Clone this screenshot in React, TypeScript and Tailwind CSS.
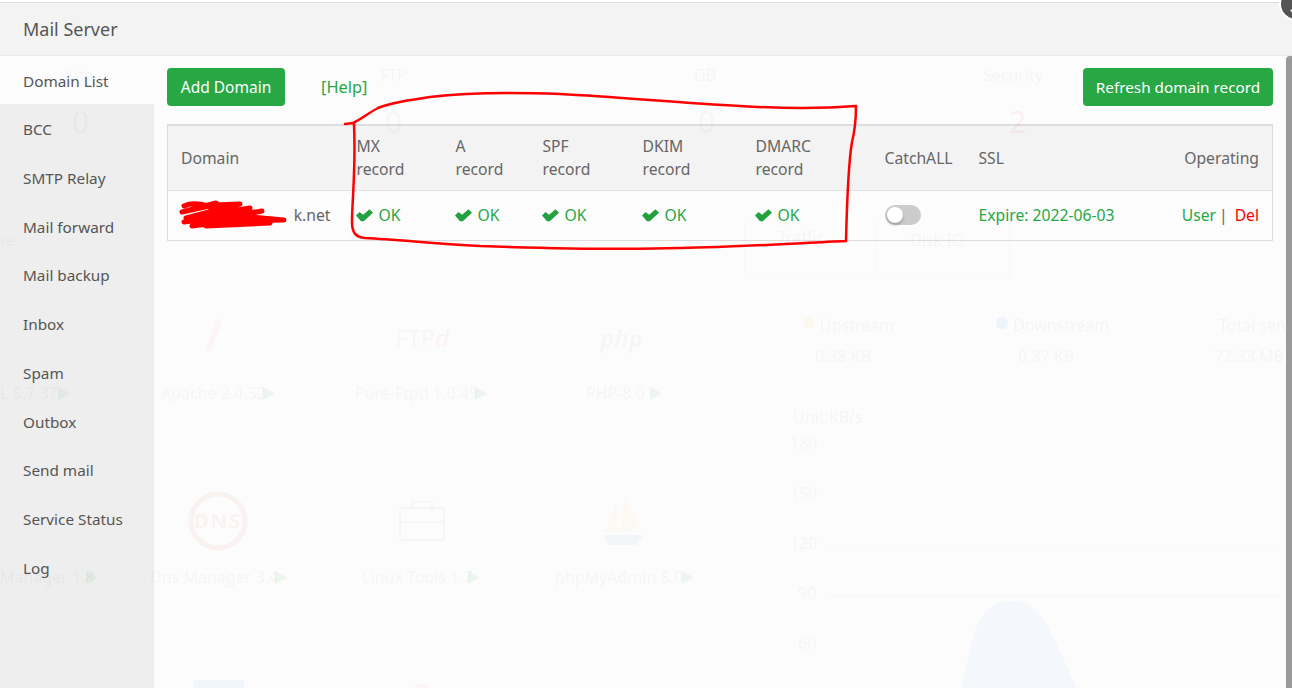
const sideItems = [
  'Domain List',
  'BCC',
  'SMTP Relay',
  'Mail forward',
  'Mail backup',
  'Inbox',
  'Spam',
  'Outbox',
  'Send mail',
  'Service Status',
  'Log',
];

const records = [
  { name: 'MX', width: 'w-[99px]' },
  { name: 'A', width: 'w-[87px]' },
  { name: 'SPF', width: 'w-[100px]' },
  { name: 'DKIM', width: 'w-[113px]' },
  { name: 'DMARC', width: 'w-[129px]' },
];

// what shows through the translucent dialog from the page behind it
const ghostText = [
  { text: 'Site', x: 66, y: 64 },
  { text: 'FTP', x: 380, y: 64 },
  { text: 'DB', x: 694, y: 64 },
  { text: 'Security', x: 983, y: 64 },
  { text: 'Traffic', x: 778, y: 226 },
  { text: 'Disk IO', x: 910, y: 229 },
  { text: 're', x: 0, y: 229 },
  { text: 'L 5.7.37', x: 0, y: 382 },
  { text: 'Apache 2.4.52', x: 161, y: 382 },
  { text: 'Pure-Ftpd 1.0.49', x: 355, y: 382 },
  { text: 'PHP-8.0', x: 586, y: 382 },
  { text: 'Manager 1.8', x: 0, y: 566 },
  { text: 'Dns Manager 3.4', x: 150, y: 566 },
  { text: 'Linux Tools 1.7', x: 362, y: 566 },
  { text: 'phpMyAdmin 5.0', x: 555, y: 566 },
  { text: 'Upstream', x: 820, y: 314 },
  { text: 'Downstream', x: 1013, y: 314 },
  { text: 'Total sent', x: 1219, y: 314 },
  { text: '0.38 KB', x: 815, y: 345 },
  { text: '0.37 KB', x: 1018, y: 345 },
  { text: '72.33 MB', x: 1214, y: 345 },
  { text: 'Unit:KB/s', x: 793, y: 406 },
  { text: '180', x: 790, y: 432 },
  { text: '150', x: 790, y: 482 },
  { text: '120', x: 790, y: 532 },
  { text: '90', x: 798, y: 582 },
  { text: '60', x: 798, y: 632 },
];

const ghostArrows = [58, 263, 475, 650].map((x) => ({ x, y: 387 })).concat(
  [86, 275, 468, 682].map((x) => ({ x, y: 571 })),
);

function GhostLayer() {
  return (
    <div className="pointer-events-none absolute inset-0 overflow-hidden blur-[0.5px]">
      {ghostText.map((g) => (
        <span
          key={g.text}
          className="absolute text-[16px] leading-[22px] whitespace-nowrap text-black/[0.03]"
          style={{ left: g.x, top: g.y }}
        >
          {g.text}
        </span>
      ))}
      {[
        { v: '0', x: 72, c: 'text-[#20a53a]/[0.04]' },
        { v: '0', x: 385, c: 'text-[#20a53a]/[0.04]' },
        { v: '0', x: 698, c: 'text-[#20a53a]/[0.04]' },
        { v: '2', x: 1009, c: 'text-[#ff0000]/[0.05]' },
      ].map((n) => (
        <span
          key={n.x}
          className={`absolute top-[100px] text-[30px] leading-[44px] ${n.c}`}
          style={{ left: n.x }}
        >
          {n.v}
        </span>
      ))}
      <span className="absolute top-[322px] left-[395px] text-[24px] leading-[32px] text-black/[0.025]">
        FTP<i className="text-[#ff0000]/[0.04]">d</i>
      </span>
      <span className="absolute top-[322px] left-[600px] text-[24px] leading-[32px] font-bold text-black/[0.025] italic">
        php
      </span>
      <span className="absolute top-[508px] left-[193px] w-[50px] text-center text-[20px] leading-[26px] font-bold tracking-[2px] text-[#e0301e]/[0.05]">
        DNS
      </span>
      <svg className="absolute inset-0" width="1292" height="688" viewBox="0 0 1292 688" fill="none">
        {ghostArrows.map((a) => (
          <path
            key={a.x}
            d={`M${a.x} ${a.y}l12 6.500l-12 6.500z`}
            fill="#20a53a"
            fillOpacity="0.07"
          />
        ))}
        <path d="M745 218v60h122M877 218v60h133v-60" stroke="#000" strokeOpacity="0.015" />
        <path d="M827 546h465M827 596h465" stroke="#000" strokeOpacity="0.015" />
        <path
          d="M962 688C972 640 975 601 1013 601C1045 601 1055 645 1077 688Z"
          fill="#2f8fff"
          fillOpacity="0.04"
        />
        <circle cx="809" cy="323" r="6" fill="#ffae00" fillOpacity="0.05" />
        <circle cx="1002" cy="323" r="6" fill="#2f8fff" fillOpacity="0.07" />
        <circle cx="218" cy="521" r="27" stroke="#e0301e" strokeOpacity="0.05" strokeWidth="5" />
        <rect x="400" y="508" width="44" height="32" rx="2" stroke="#000" strokeOpacity="0.025" strokeWidth="2" />
        <path d="M412 508v-6h20v6M400 522h44" stroke="#000" strokeOpacity="0.025" strokeWidth="2" />
        <path d="M605 532l12-30v30zM620 532l5-34 16 30z" fill="#ff9d00" fillOpacity="0.04" />
        <path d="M604 535h40l-8 10h-28z" fill="#3b4fa0" fillOpacity="0.04" />
        <path d="M216 318l6 4-12 30-4-2z" fill="#e0301e" fillOpacity="0.035" />
        <rect x="193" y="680" width="51" height="12" rx="4" fill="#2f8fff" fillOpacity="0.05" />
        <circle cx="421" cy="692" r="8" fill="#e0301e" fillOpacity="0.04" />
      </svg>
    </div>
  );
}

function Toggle() {
  return (
    <div className="relative h-[20px] w-[36px] rounded-full bg-[#cccccc]">
      <div className="absolute top-[2px] left-[2px] size-[16px] rounded-full bg-white shadow-[0_2px_3px_rgba(0,0,0,0.25)]" />
    </div>
  );
}

function CheckMark() {
  return (
    <svg width="17" height="13" viewBox="0 0 16 12" className="-ml-[1px] shrink-0">
      <path d="M0 6L3.300 2.700L6.700 5.300L12.700 0L16 3.300L7.300 11.500H4.700Z" fill="#23a03f" />
    </svg>
  );
}

export default function App() {
  return (
    <div
      className="relative h-[688px] w-[1292px] overflow-hidden bg-white text-[15.7px] text-[#666666]"
      style={{ fontFamily: '"Noto Sans", "Open Sans", sans-serif' }}
    >
      <div className="mt-[2px] flex h-[686px] flex-col border-t border-[#dddddd]">
        <div className="flex h-[53px] items-center border-b border-[#e8e8e8] bg-[#f3f3f3] pl-[23px] text-[18px] text-[#555555]">
          Mail Server
        </div>

        <div className="flex min-h-0 flex-1">
          {/* Sidebar */}
          <aside className="w-[154px] bg-[#eeeeee]">
            {sideItems.map((item, i) => (
              <div
                key={item}
                className={`flex items-center pt-[3px] pl-[23px] text-[15.3px] text-[#555555] ${
                  i === 0 ? 'h-[48px] bg-[#fcfcfc]' : 'h-[48.7px]'
                }`}
              >
                {item}
              </div>
            ))}
          </aside>

          {/* Content */}
          <main className="flex-1 bg-[#fcfcfc] pt-[12px] pr-[19px] pl-[13px]">
            <div className="flex h-[38px] items-center">
              <button
                type="button"
                className="h-[38px] w-[118px] rounded bg-[#28a745] pt-[1px] text-[15.5px] text-white"
              >
                Add Domain
              </button>
              <a href="#help" className="ml-[36px] text-[16.4px] text-[#28a745]">
                [Help]
              </a>
              <button
                type="button"
                className="ml-auto h-[38px] w-[190px] rounded bg-[#28a745] text-[15.3px] text-white"
              >
                Refresh domain record
              </button>
            </div>

            <table className="mt-[18px] w-[1106px] table-fixed border border-t-2 border-[#dddddd]">
              <thead>
                <tr className="h-[65px] border-b border-[#e4e4e4] bg-[#f3f3f3] text-left">
                  <th className="w-[176px] pt-[2px] pl-[13px] font-normal">Domain</th>
                  {records.map((r) => (
                    <th key={r.name} className={`${r.width} pt-[1px] pl-[13px] font-normal leading-[23px]`}>
                      {r.name}
                      <br />
                      record
                    </th>
                  ))}
                  <th className="w-[94px] pt-[2px] pl-[13px] font-normal">CatchALL</th>
                  <th className="w-[206px] pt-[2px] pl-[13px] font-normal">SSL</th>
                  <th className="pt-[2px] pr-[13px] text-right font-normal">Operating</th>
                </tr>
              </thead>
              <tbody>
                <tr className="h-[50px]">
                  <td className="pt-[2px] pr-[13px] pl-[13px] text-right">k.net</td>
                  {records.map((r) => (
                    <td key={r.name} className="pt-[2px] pl-[13px] text-[#28a745]">
                      <span className="flex items-center gap-[6px]">
                        <CheckMark />
                        OK
                      </span>
                    </td>
                  ))}
                  <td className="pl-[13px]">
                    <Toggle />
                  </td>
                  <td className="pt-[2px] pl-[13px] text-[#28a745]">Expire: 2022-06-03</td>
                  <td className="pt-[2px] pr-[13px] text-right whitespace-nowrap">
                    <span className="text-[#28a745]">User</span>
                    <span className="ml-[3px]">|</span>
                    <span className="ml-[7px] text-[#ff0000]">Del</span>
                  </td>
                </tr>
              </tbody>
            </table>
          </main>
        </div>
      </div>

      <GhostLayer />

      {/* dialog scrollbar */}
      <div className="absolute top-[56px] right-0 bottom-0 w-[6px] rounded-tl-[4px] bg-[#999999]" />

      {/* close button, mostly off the window */}
      <div className="absolute -top-[11px] -right-[19px] flex size-[30px] items-center justify-start rounded-full bg-[#555555] ring-2 ring-white">
        <div className="mt-[16px] ml-[9px] h-[2px] w-[6px] rotate-45 bg-white" />
      </div>

      {/* red pen marks drawn on the screenshot */}
      <svg
        className="pointer-events-none absolute inset-0"
        width="1292"
        height="688"
        viewBox="0 0 1292 688"
        fill="none"
      >
        <path
          d="M345 124L353 123C362 119 368 113 378 108C392 102 410 100 430 97C470 92 510 92 560 94C620 97 680 103 740 106C790 109 830 108 856 106C856 120 855 130 852 142C848 165 847 200 846 241C800 243 740 247 680 248C620 250 540 248 480 246C430 243 400 240 365 238C355 237 352 232 352 222C352 200 356 170 354 124"
          stroke="#ff0000"
          strokeWidth="2.500"
          strokeLinejoin="round"
          strokeLinecap="round"
        />
        {/* redaction scribble over the domain name */}
        <path d="M200 213h28M258 219h20" stroke="#888888" strokeWidth="2" />
        <path
          d="M184 206C192 202 205 204 212 208L216 203L182 212L214 205L240 204L186 218L250 208L184 222L200 220L262 211L192 226L232 221L284 220L240 216L270 223L206 226"
          stroke="#ff0000"
          strokeWidth="5"
          strokeLinejoin="round"
          strokeLinecap="round"
        />
      </svg>
    </div>
  );
}
